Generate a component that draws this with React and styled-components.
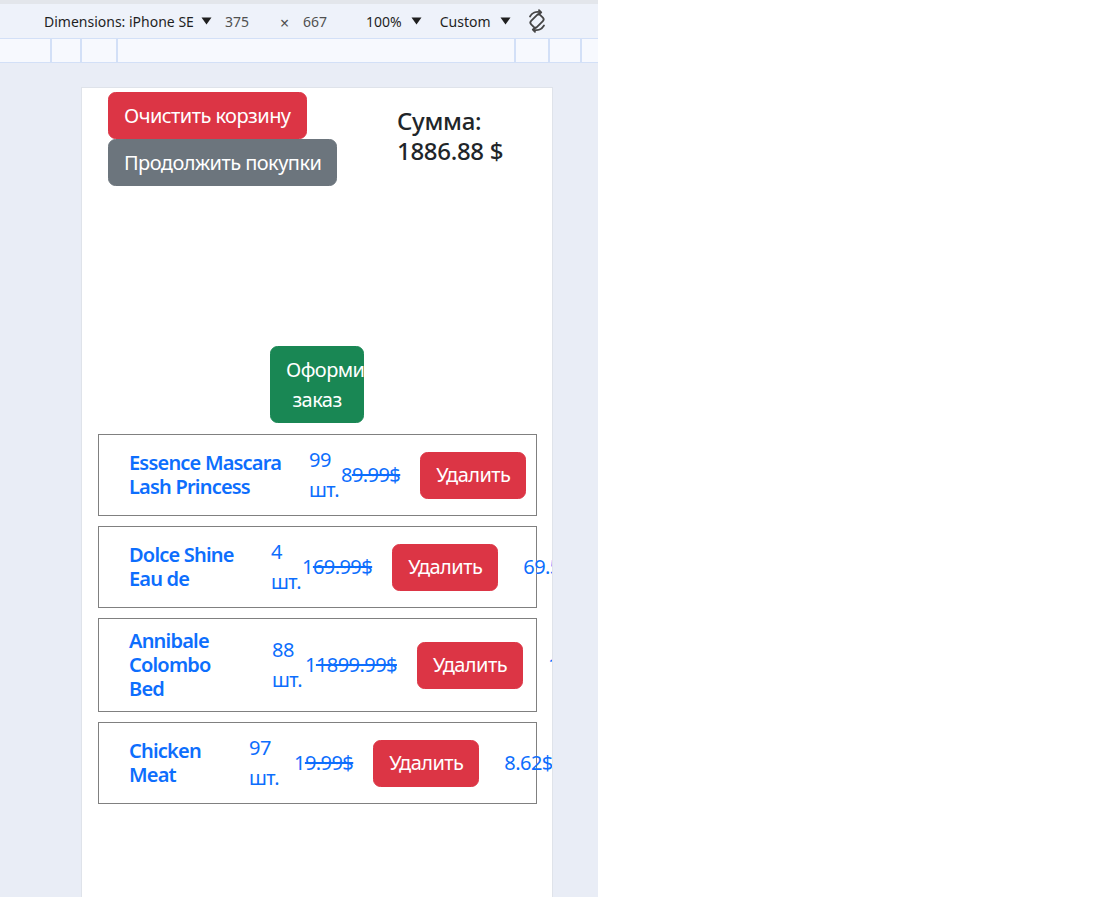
import React from 'react';
import styled, { createGlobalStyle } from 'styled-components';

const GlobalStyle = createGlobalStyle`
  body {
    margin: 0;
    background: #ffffff;
    font-family: "Segoe UI", "Noto Sans", "Liberation Sans", sans-serif;
  }
`;

const items = [
  { lines: ['Essence Mascara', 'Lash Princess'], qty: 99, pre: '8', old: '9.99$', total: '1.76$', nameW: 180, qtyW: 32 },
  { lines: ['Dolce Shine', 'Eau de'], qty: 4, pre: '1', old: '69.99$', total: '69.5$', nameW: 142, qtyW: 31 },
  { lines: ['Annibale', 'Colombo', 'Bed'], qty: 88, pre: '1', old: '1899.99$', total: '1749.99$', nameW: 143, qtyW: 33 },
  { lines: ['Chicken', 'Meat'], qty: 97, pre: '1', old: '9.99$', total: '8.62$', nameW: 120, qtyW: 45 },
];

const rulerMarks = [52, 30, 36, 398, 34, 32, 16];

const Caret = () => (
  <svg width="11" height="8" viewBox="0 0 11 8">
    <path d="M0.5 0.5 L10.5 0.5 L5.5 7.5 Z" fill="#1f1f1f" />
  </svg>
);

const RotateIcon = () => (
  <svg width="24" height="24" viewBox="0 0 24 24" fill="none" stroke="#454545" strokeWidth="1.8">
    <rect x="7.8" y="5.5" width="8.4" height="13" rx="2.4" transform="rotate(45 12 12)" />
    <path d="M5 7.5 A9 9 0 0 1 15 3.2" strokeLinecap="round" />
    <path d="M19 16.5 A9 9 0 0 1 9 20.8" strokeLinecap="round" />
    <path d="M14 1.2 L16.2 3.4 L13.6 5.2" strokeLinecap="round" strokeLinejoin="round" />
    <path d="M10 22.8 L7.8 20.6 L10.4 18.8" strokeLinecap="round" strokeLinejoin="round" />
  </svg>
);

const App = () => {
  return (
    <>
      <GlobalStyle />
      <Screen>
        <DevArea>
          <Toolbar>
            <ToolText $ml={44}>Dimensions: iPhone SE</ToolText>
            <CaretBox $ml={7}><Caret /></CaretBox>
            <SizeText $ml={13}>375</SizeText>
            <Times $ml={31}>×</Times>
            <SizeText $ml={14}>667</SizeText>
            <ToolText $ml={39}>100%</ToolText>
            <CaretBox $ml={9}><Caret /></CaretBox>
            <ToolText $ml={18}>Custom</ToolText>
            <CaretBox $ml={9}><Caret /></CaretBox>
            <CaretBox $ml={14}><RotateIcon /></CaretBox>
          </Toolbar>
          <Ruler>
            {rulerMarks.map((w, i) => (
              <RulerCell key={i} $w={w} />
            ))}
          </Ruler>
          <Stage>
            <Viewport>
              <TopBar>
                <ButtonCol>
                  <Btn $bg="#dc3545">Очистить корзину</Btn>
                  <Btn $bg="#6c757d">Продолжить покупки</Btn>
                </ButtonCol>
                <Sum>Сумма: 1886.88 $</Sum>
              </TopBar>
              <OrderWrap>
                <OrderBtn>Оформить заказ</OrderBtn>
              </OrderWrap>
              <List>
                {items.map((it) => (
                  <Row key={it.lines.join(' ')}>
                    <Name $w={it.nameW}>
                      {it.lines.map((l) => (
                        <NameLine key={l}>{l}</NameLine>
                      ))}
                    </Name>
                    <Qty $w={it.qtyW}>
                      <div>{it.qty}</div>
                      <div>шт.</div>
                    </Qty>
                    <Price>
                      {it.pre}
                      <Old>{it.old}</Old>
                    </Price>
                    <Btn $bg="#dc3545">Удалить</Btn>
                    <Total>{it.total}</Total>
                  </Row>
                ))}
              </List>
            </Viewport>
          </Stage>
        </DevArea>
      </Screen>
    </>
  );
};

export default App;

const Screen = styled.div`
  width: 1105px;
  height: 897px;
  display: flex;
  background: #ffffff;
  overflow: hidden;
`;

const DevArea = styled.div`
  width: 598px;
  height: 897px;
  display: flex;
  flex-direction: column;
  background: #e9edf6;
`;

const Toolbar = styled.div`
  height: 34px;
  border-top: 4px solid #e3e6eb;
  background: #eef2fa;
  display: flex;
  align-items: center;
  font-size: 14px;
  color: #1f1f1f;
`;

const ToolText = styled.span`
  margin-left: ${(p) => p.$ml}px;
  white-space: nowrap;
`;

const SizeText = styled.span`
  margin-left: ${(p) => p.$ml}px;
  color: #505050;
  font-size: 14px;
`;

const Times = styled.span`
  margin-left: ${(p) => p.$ml}px;
  color: #505050;
  font-size: 16px;
  margin-top: 4px;
`;

const CaretBox = styled.span`
  margin-left: ${(p) => p.$ml}px;
  display: flex;
  align-items: center;
`;

const Ruler = styled.div`
  height: 23px;
  display: flex;
  background: #f7f9fe;
  border-top: 1px solid #d3e0f7;
  border-bottom: 1px solid #d3e0f7;
`;

const RulerCell = styled.div`
  width: ${(p) => p.$w}px;
  flex-shrink: 0;
  border-right: 2px solid #d3e0f7;
  box-sizing: border-box;
  &:last-child {
    border-right: none;
  }
`;

const Stage = styled.div`
  flex: 1;
  padding: 25px 0 0 82px;
  display: flex;
  min-height: 0;
`;

const Viewport = styled.div`
  width: 470px;
  background: #ffffff;
  box-shadow: 0 0 0 1px #dfe3ea;
  overflow: hidden;
  color: #212529;
`;

const TopBar = styled.div`
  display: flex;
  padding: 4px 0 0 26px;
`;

const ButtonCol = styled.div`
  width: 289px;
  flex-shrink: 0;
  display: flex;
  flex-direction: column;
  align-items: flex-start;
`;

const Btn = styled.button`
  background: ${(p) => p.$bg};
  color: #ffffff;
  border: 1px solid ${(p) => p.$bg};
  border-radius: 7.5px;
  padding: 7.5px 15px;
  font-family: inherit;
  font-size: 20px;
  letter-spacing: -0.55px;
  line-height: 30px;
  white-space: nowrap;
  flex-shrink: 0;
`;

const Sum = styled.h4`
  margin: 14px 0 0;
  width: 140px;
  font-size: 24px;
  line-height: 30px;
  font-weight: 500;
  letter-spacing: -0.3px;
`;

const OrderWrap = styled.div`
  display: flex;
  justify-content: center;
  margin-top: 160px;
`;

const OrderBtn = styled.button`
  width: 94px;
  background: #198754;
  color: #ffffff;
  border: 1px solid #198754;
  border-radius: 7.5px;
  padding: 7.5px 15px;
  font-family: inherit;
  font-size: 20px;
  letter-spacing: -0.55px;
  line-height: 30px;
  text-align: center;
`;

const List = styled.div`
  display: flex;
  flex-direction: column;
  gap: 10px;
  margin: 11px 15px 0 16px;
`;

const Row = styled.div`
  display: flex;
  align-items: center;
  border: 1px solid #808080;
  padding: 10px 0 10px 30px;
  white-space: nowrap;
`;

const Name = styled.div`
  width: ${(p) => p.$w}px;
  flex-shrink: 0;
  color: #0d6efd;
  font-size: 20px;
  font-weight: 600;
  letter-spacing: -0.8px;
  line-height: 24px;
`;

const NameLine = styled.div``;

const Qty = styled.div`
  width: ${(p) => p.$w}px;
  flex-shrink: 0;
  color: #0d6efd;
  font-size: 20px;
  letter-spacing: -0.55px;
  line-height: 30px;
`;

const Price = styled.div`
  color: #0d6efd;
  font-size: 20px;
  letter-spacing: -0.55px;
  line-height: 30px;
  margin-right: 20px;
  flex-shrink: 0;
`;

const Old = styled.span`
  text-decoration: line-through;
`;

const Total = styled.div`
  color: #0d6efd;
  font-size: 20px;
  letter-spacing: -0.55px;
  line-height: 30px;
  margin-left: 25px;
  flex-shrink: 0;
`;
